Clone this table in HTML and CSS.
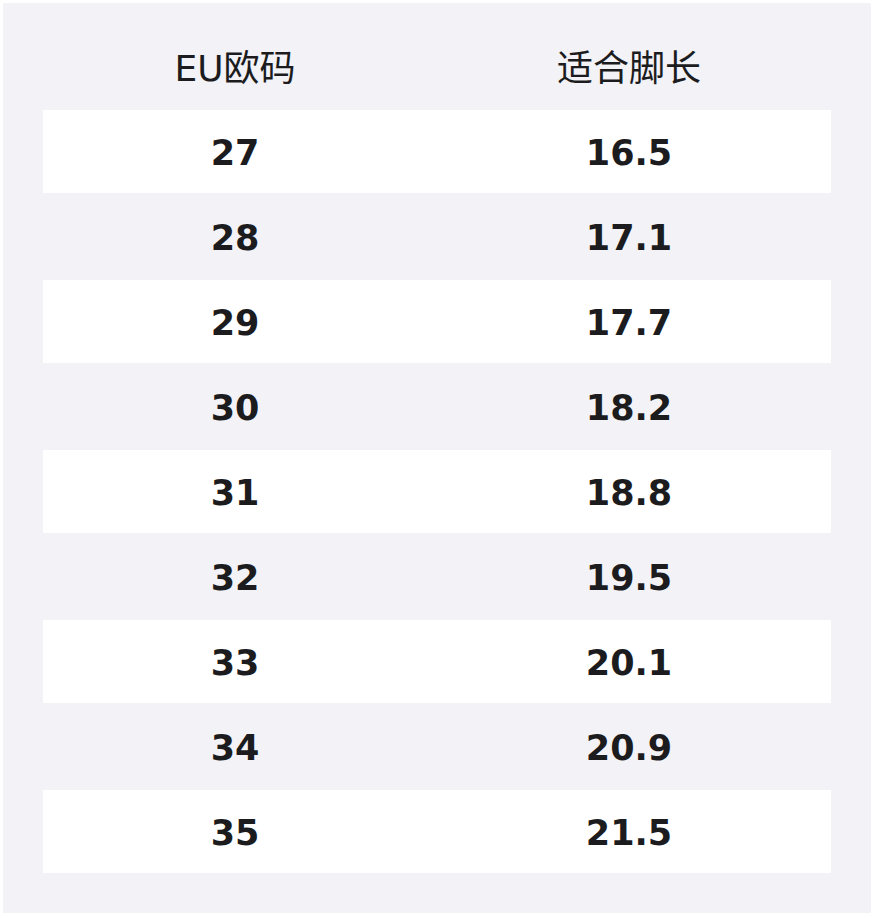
FILE: index.html
```html
<!DOCTYPE html>
<html lang="zh-CN">
<head>
<meta charset="utf-8">
<link rel="stylesheet" href="styles.css">
</head>
<body>
<div class="panel">
  <div class="row head">
    <div class="cell">EU欧码</div>
    <div class="cell">适合脚长</div>
  </div>
  <div class="row odd"><div class="cell">27</div><div class="cell">16.5</div></div>
  <div class="row"><div class="cell">28</div><div class="cell">17.1</div></div>
  <div class="row odd"><div class="cell">29</div><div class="cell">17.7</div></div>
  <div class="row"><div class="cell">30</div><div class="cell">18.2</div></div>
  <div class="row odd"><div class="cell">31</div><div class="cell">18.8</div></div>
  <div class="row"><div class="cell">32</div><div class="cell">19.5</div></div>
  <div class="row odd"><div class="cell">33</div><div class="cell">20.1</div></div>
  <div class="row"><div class="cell">34</div><div class="cell">20.9</div></div>
  <div class="row odd"><div class="cell">35</div><div class="cell">21.5</div></div>
</div>
</body>
</html>
```
FILE: styles.css
```css
html, body {
  margin: 0;
  padding: 0;
  background: #ffffff;
}
body {
  padding: 3px;
  font-family: "DejaVu Sans", "Noto Sans CJK SC", sans-serif;
  color: #1c1c1e;
}
.panel {
  width: 868px;
  box-sizing: border-box;
  background: #f2f2f7;
  padding: 20px 40px 38px;
}
.row {
  display: grid;
  grid-template-columns: 1fr 1fr;
  height: 85px;
  box-sizing: border-box;
  border-bottom: 2px solid transparent;
  background-clip: padding-box;
}
.row.odd {
  background-color: #ffffff;
}
.cell {
  display: flex;
  align-items: center;
  justify-content: center;
  padding-right: 10px;
  font-size: 35px;
  font-weight: bold;
  padding-top: 2px;
}
.row.head {
  height: 87px;
  border-bottom: 0;
}
.head .cell {
  font-weight: normal;
  font-size: 36px;
  padding-top: 0;
  padding-bottom: 4px;
}
```
